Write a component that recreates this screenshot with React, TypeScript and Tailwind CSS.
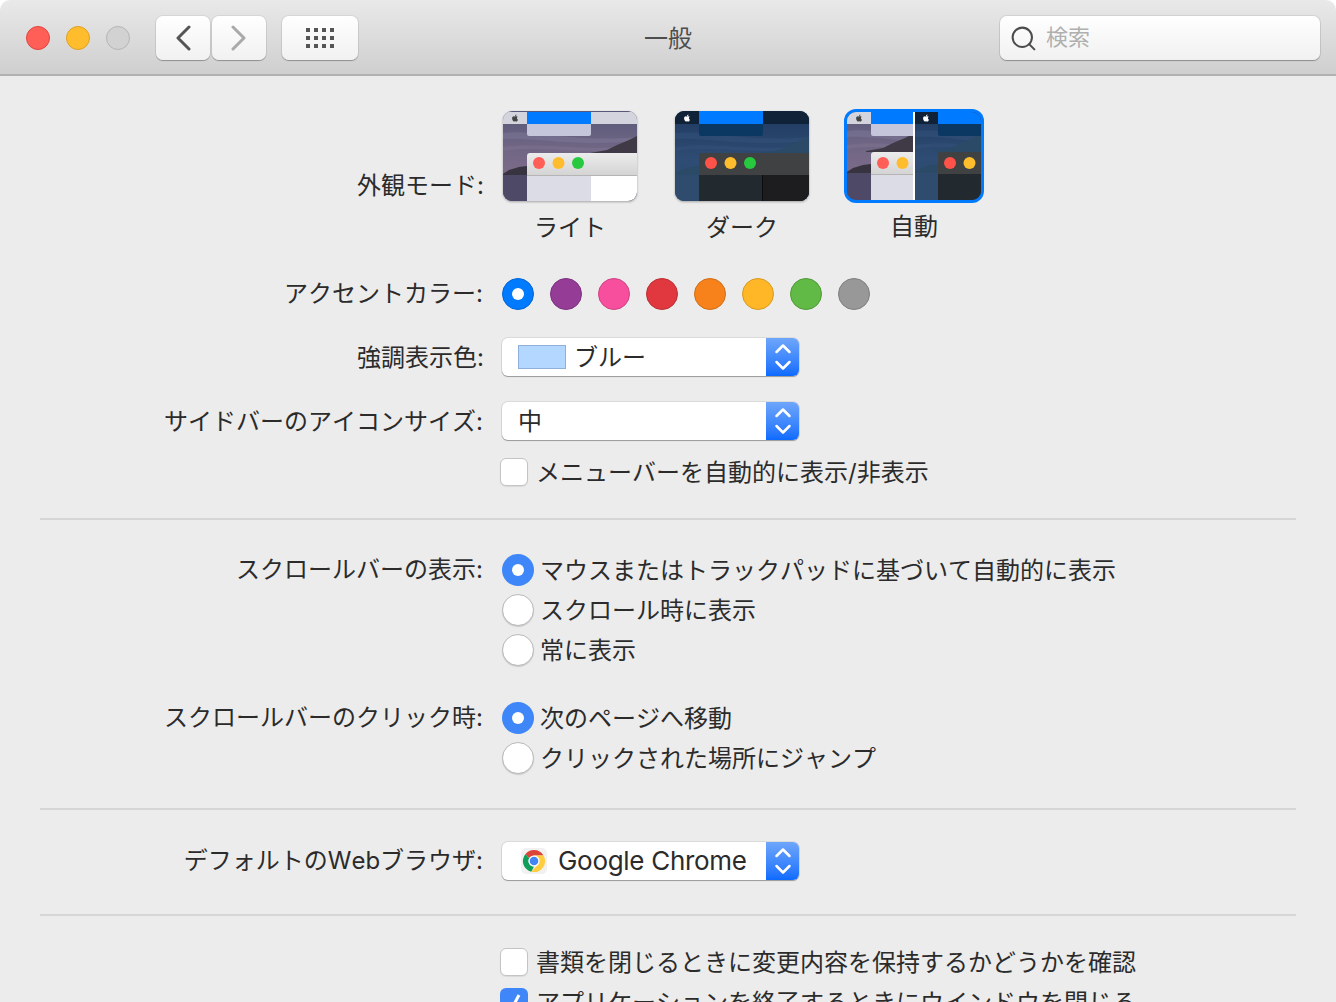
import { ReactNode } from "react";
import { Search } from "lucide-react";
import { FaApple } from "react-icons/fa";

const accents = [
  { fill: "bg-[#007aff]", ring: "border-[#0065d6]", on: true },
  { fill: "bg-[#953d96]", ring: "border-[#7c3180]", on: false },
  { fill: "bg-[#f74f9e]", ring: "border-[#cf4283]", on: false },
  { fill: "bg-[#e0383e]", ring: "border-[#bb2f34]", on: false },
  { fill: "bg-[#f7821b]", ring: "border-[#cf6d16]", on: false },
  { fill: "bg-[#ffb727]", ring: "border-[#d69a20]", on: false },
  { fill: "bg-[#62ba46]", ring: "border-[#4f9a38]", on: false },
  { fill: "bg-[#989898]", ring: "border-[#7f7f7f]", on: false },
];

function Wallpaper({ id, x, w, dark }: { id: string; x: number; w: number; dark: boolean }) {
  return (
    <g clipPath={`url(#${id})`}>
      <rect x={x} y="0" width={w} height="90" fill={`url(#${dark ? "wall-dark" : "wall-light"})`} />
      <path
        d={`M${x} 22 C ${x + 30} 18 ${x + 70} 32 ${x + w} 26 L ${x + w} 30 C ${x + 70} 36 ${x + 30} 26 ${x} 28 Z`}
        fill={dark ? "#3a5a84" : "#8a84a4"}
        opacity="0.35"
      />
      <path
        d={`M${x} 36 C ${x + 40} 30 ${x + 80} 42 ${x + w} 34 L ${x + w} 37 C ${x + 80} 45 ${x + 40} 34 ${x} 40 Z`}
        fill={dark ? "#3a5a84" : "#8a7a98"}
        opacity="0.3"
      />
      <rect x={x} y="64" width={w} height="30" fill={dark ? "#2f4c6e" : "#4f4968"} />
      <path
        d={`M${x} 63 L${x + 6} 59 L${x + 16} 56 L${x + 24} 55 L${x + 30} 58 L${x + 34} 64 L${x} 64 Z`}
        fill={dark ? "#2b4a68" : "#38343f"}
      />
      <path
        d={`M${x + w - 47} 42 L${x + w - 30} 39 L${x + w - 20} 34 L${x + w - 8} 29 L${x + w} 25 L${x + w} 43 L${x + w - 47} 43 Z`}
        fill={dark ? "#2b4a68" : "#3f3a46"}
      />
    </g>
  );
}

function LightThumb() {
  return (
    <svg width="134" height="90" viewBox="0 0 134 90" className="block drop-shadow-[0_1px_1px_rgba(0,0,0,0.3)]">
      <defs>
        <clipPath id="lt"><rect width="134" height="90" rx="9" /></clipPath>
        <linearGradient id="wall-light" x1="0" y1="0" x2="0" y2="1">
          <stop offset="0" stopColor="#585878" />
          <stop offset="0.4" stopColor="#6f6684" />
          <stop offset="0.65" stopColor="#7a6a88" />
          <stop offset="1" stopColor="#4a4565" />
        </linearGradient>
        <linearGradient id="bar-light" x1="0" y1="0" x2="0" y2="1">
          <stop offset="0" stopColor="#ececec" />
          <stop offset="1" stopColor="#d4d4d4" />
        </linearGradient>
      </defs>
      <Wallpaper id="lt" x={0} w={134} dark={false} />
      <g clipPath="url(#lt)">
        <rect y="1" width="134" height="12" fill="#d4d4de" />
        <rect x="24" y="1" width="64" height="12" fill="#007aff" />
        <path d="M24 13 H88 V23 a2 2 0 0 1 -2 2 H26 a2 2 0 0 1 -2 -2 Z" fill="#c5c5dc" />
        <path d="M24 45 a3 3 0 0 1 3 -3 H134 V64 H24 Z" fill="url(#bar-light)" />
        <rect x="24" y="64" width="110" height="1" fill="#b5b5b5" />
        <rect x="24" y="65" width="64" height="25" fill="#dcdce6" />
        <rect x="88" y="65" width="46" height="25" fill="#ffffff" />
        <circle cx="36" cy="52" r="6" fill="#ff5f57" />
        <circle cx="55.500" cy="52" r="6" fill="#ffbd2e" />
        <circle cx="75" cy="52" r="6" fill="#27c93f" />
      </g>
      <FaApple x="8" y="3" size={8} color="#444444" />
    </svg>
  );
}

function DarkThumb() {
  return (
    <svg width="134" height="90" viewBox="0 0 134 90" className="block drop-shadow-[0_1px_1px_rgba(0,0,0,0.3)]">
      <defs>
        <clipPath id="dk"><rect width="134" height="90" rx="9" /></clipPath>
        <linearGradient id="wall-dark" x1="0" y1="0" x2="0" y2="1">
          <stop offset="0" stopColor="#1f3a5f" />
          <stop offset="0.55" stopColor="#2f4c74" />
          <stop offset="1" stopColor="#2c4a6c" />
        </linearGradient>
      </defs>
      <Wallpaper id="dk" x={0} w={134} dark />
      <g clipPath="url(#dk)">
        <rect y="0" width="134" height="13" fill="#0f2238" />
        <rect x="24" y="0" width="64" height="13" fill="#007aff" />
        <path d="M24 13 H88 V23 a2 2 0 0 1 -2 2 H26 a2 2 0 0 1 -2 -2 Z" fill="#0b3862" />
        <path d="M24 45 a3 3 0 0 1 3 -3 H134 V64 H24 Z" fill="#3f4143" />
        <rect x="24" y="64" width="110" height="26" fill="#22292f" />
        <rect x="87" y="64" width="47" height="26" fill="#1d1d1f" />
        <rect x="87" y="64" width="1" height="26" fill="#0c0c0c" />
        <circle cx="36" cy="52" r="6" fill="#ff5249" />
        <circle cx="55.500" cy="52" r="6" fill="#ffbd2e" />
        <circle cx="75" cy="52" r="6" fill="#27c93f" />
      </g>
      <FaApple x="8" y="3" size={8} color="#ffffff" />
    </svg>
  );
}

function AutoThumb() {
  return (
    <svg width="140" height="94" viewBox="0 0 140 94" className="block">
      <defs>
        <clipPath id="au-a"><path d="M12 3 H69 V91 H12 a9 9 0 0 1 -9 -9 V12 a9 9 0 0 1 9 -9 Z" /></clipPath>
        <clipPath id="au-b"><path d="M71 3 H128 a9 9 0 0 1 9 9 V82 a9 9 0 0 1 -9 9 H71 Z" /></clipPath>
      </defs>
      <rect width="140" height="94" rx="12" fill="#007aff" />
      <Wallpaper id="au-a" x={3} w={66} dark={false} />
      <Wallpaper id="au-b" x={71} w={66} dark />
      <g clipPath="url(#au-a)">
        <rect x="3" y="3" width="24" height="12" fill="#d4d4de" />
        <rect x="27" y="3" width="42" height="12" fill="#007aff" />
        <path d="M27 15 H69 V27 H29 a2 2 0 0 1 -2 -2 Z" fill="#c5c5dc" />
        <path d="M27 46 a3 3 0 0 1 3 -3 H69 V65 H27 Z" fill="url(#bar-light)" />
        <rect x="27" y="65" width="42" height="1" fill="#b5b5b5" />
        <rect x="27" y="66" width="42" height="25" fill="#dcdce6" />
        <circle cx="39" cy="54" r="6" fill="#ff5f57" />
        <circle cx="58.500" cy="54" r="6" fill="#ffbd2e" />
      </g>
      <g clipPath="url(#au-b)">
        <rect x="71" y="3" width="23" height="12" fill="#0f2238" />
        <rect x="94" y="3" width="43" height="12" fill="#007aff" />
        <path d="M94 15 H137 V27 H96 a2 2 0 0 1 -2 -2 Z" fill="#0b3862" />
        <path d="M94 46 a3 3 0 0 1 3 -3 H137 V65 H94 Z" fill="#3f4143" />
        <rect x="94" y="65" width="43" height="26" fill="#22292f" />
        <circle cx="106" cy="54" r="6" fill="#ff5249" />
        <circle cx="125.500" cy="54" r="6" fill="#ffbd2e" />
      </g>
      <rect x="69" y="3" width="2" height="88" fill="#ffffff" />
      <FaApple x="11" y="5" size={8} color="#444444" />
      <FaApple x="78" y="5" size={8} color="#ffffff" />
    </svg>
  );
}

function Row({
  label,
  children,
  className,
  labelClass,
}: {
  label?: string;
  children: ReactNode;
  className?: string;
  labelClass?: string;
}) {
  return (
    <div className={`flex ${className ?? ""}`}>
      <div className={`w-[483px] shrink-0 text-right leading-[40px] ${labelClass ?? ""}`}>{label}</div>
      <div className="ml-[17px]">{children}</div>
    </div>
  );
}

function Stepper() {
  return (
    <div className="flex w-[33px] flex-col items-center justify-center rounded-r-[6px] bg-gradient-to-b from-[#6ea6fb] to-[#0a6bff]">
      <svg width="20" height="32" viewBox="0 0 20 32" fill="none" stroke="#ffffff" strokeWidth="2.500" strokeLinecap="round" strokeLinejoin="round">
        <path d="M3.500 11 L10 4.500 L16.500 11" />
        <path d="M3.500 21 L10 27.500 L16.500 21" />
      </svg>
    </div>
  );
}

function Select({ children }: { children: ReactNode }) {
  return (
    <div className="my-px ml-0.5 flex h-[38px] w-[297px] rounded-[6px] bg-white shadow-[0_0_0_1px_rgba(0,0,0,0.07),0_1px_1px_rgba(0,0,0,0.3)]">
      <div className="flex flex-1 items-center">{children}</div>
      <Stepper />
    </div>
  );
}

function Radio({ on, children }: { on?: boolean; children: ReactNode }) {
  return (
    <div className="ml-0.5 flex h-10 items-center gap-1.5">
      {on ? (
        <span className="flex size-8 items-center justify-center rounded-full bg-[#3f87f8]">
          <span className="size-3 rounded-full bg-white" />
        </span>
      ) : (
        <span className="size-8 rounded-full border border-[#b9b9b9] bg-white shadow-[0_1px_1px_rgba(0,0,0,0.15)]" />
      )}
      <span className="mt-0.5">{children}</span>
    </div>
  );
}

function Check({ on, children }: { on?: boolean; children: ReactNode }) {
  return (
    <div className="flex h-7 items-center gap-2">
      {on ? (
        <span className="flex size-7 items-center justify-center rounded-[6px] bg-[#3f87f8]">
          <svg width="20" height="20" viewBox="0 0 20 20" fill="none" stroke="#ffffff" strokeWidth="3">
            <path d="M4 11 L8 16 L15 3" />
          </svg>
        </span>
      ) : (
        <span className="size-7 rounded-[6px] border border-[#c4c4c4] bg-white shadow-[0_1px_1px_rgba(0,0,0,0.08)]" />
      )}
      <span className="mt-0.5">{children}</span>
    </div>
  );
}

function ChromeIcon() {
  return (
    <span className="ml-[19px] flex size-[26px] items-center justify-center rounded-[5px] bg-[#f1f1f1]">
      <svg width="24" height="24" viewBox="0 0 24 24">
        <path d="M12 1 A11 11 0 0 1 21.500 6.500 L12 6.500 A5.500 5.500 0 0 0 7.200 9.300 L3.500 4.900 A11 11 0 0 1 12 1 Z" fill="#db4437" />
        <path d="M3.500 4.900 L7.200 9.300 A5.500 5.500 0 0 0 12 17.500 L9.300 22.700 A11 11 0 0 1 3.500 4.900 Z" fill="#0f9d58" />
        <path d="M21.500 6.500 A11 11 0 0 1 9.300 22.700 L14.700 16.800 A5.500 5.500 0 0 0 16.800 9.300 L12 6.500 Z" fill="#ffcd40" />
        <circle cx="12" cy="12" r="5.500" fill="#ffffff" />
        <circle cx="12" cy="12" r="4.300" fill="#4285f4" />
      </svg>
    </span>
  );
}

function TitleButton({ className, children }: { className: string; children: ReactNode }) {
  return (
    <div className={`flex h-11 items-center justify-center rounded-[7px] bg-gradient-to-b from-white to-[#f1f1f1] shadow-[0_0_0_1px_rgba(0,0,0,0.06),0_1px_1px_rgba(0,0,0,0.28)] ${className}`}>
      {children}
    </div>
  );
}

const dots = Array.from({ length: 12 });

export default function App() {
  return (
    <div
      className="h-[1002px] w-[1336px] overflow-hidden bg-[#ececec] text-[24px] text-[#2b2b2b] [font-kerning:none]"
      style={{ fontFamily: '"Inter", "Noto Sans CJK JP", sans-serif' }}
    >
      <div className="bg-white">
        <div className="grid h-[76px] grid-cols-[1fr_auto_1fr] items-center rounded-t-[10px] border-b-2 border-[#b1b1b1] bg-gradient-to-b from-[#e9e9e9] to-[#cfcfcf] pt-0.5">
          <div className="flex items-center">
            <div className="ml-[26px] flex gap-4">
              <span className="size-6 rounded-full border border-[#e0443e] bg-[#ff5f57]" />
              <span className="size-6 rounded-full border border-[#dea123] bg-[#ffbd2e]" />
              <span className="size-6 rounded-full border border-[#b5b5b5] bg-[#d2d2d2]" />
            </div>
            <TitleButton className="ml-[26px] w-[54px]">
              <svg width="16" height="26" viewBox="0 0 16 26" fill="none" stroke="#555555" strokeWidth="3" strokeLinecap="round" strokeLinejoin="round">
                <path d="M14 2 L3 13 L14 24" />
              </svg>
            </TitleButton>
            <TitleButton className="ml-0.5 w-[54px]">
              <svg width="16" height="26" viewBox="0 0 16 26" fill="none" stroke="#a9a9a9" strokeWidth="3" strokeLinecap="round" strokeLinejoin="round">
                <path d="M2 2 L13 13 L2 24" />
              </svg>
            </TitleButton>
            <TitleButton className="ml-4 w-[76px]">
              <div className="grid grid-cols-4 gap-1">
                {dots.map((_, i) => (
                  <span key={i} className="size-1 bg-[#555555]" />
                ))}
              </div>
            </TitleButton>
          </div>
          <div className="mt-0.5 text-[#4d4d4d]">一般</div>
          <div className="flex justify-end pr-4">
            <div className="flex h-11 w-[320px] items-center gap-2 rounded-[7px] bg-gradient-to-b from-white to-[#f1f1f1] pl-[9px] text-[#b0b0b0] shadow-[0_0_0_1px_rgba(0,0,0,0.08),0_1px_1px_rgba(0,0,0,0.28)]">
              <Search size={29} strokeWidth={1.7} className="text-[#4c4c4c]" />
              <span className="mb-0.5 text-[22px] leading-[30px]">検索</span>
            </div>
          </div>
        </div>
      </div>

      <div className="flex pt-[33px]">
        <div className="w-[484px] shrink-0 pt-[57px] text-right leading-[40px]">外観モード:</div>
        <div className="ml-[19px] flex">
          <div className="mt-0.5 flex w-[134px] flex-col items-center">
            <LightThumb />
            <div className="mt-[13px] leading-7">ライト</div>
          </div>
          <div className="mt-0.5 ml-[38px] flex w-[134px] flex-col items-center">
            <DarkThumb />
            <div className="mt-[13px] leading-7">ダーク</div>
          </div>
          <div className="ml-[35px] flex w-[140px] flex-col items-center">
            <AutoThumb />
            <div className="mt-2.5 leading-7">自動</div>
          </div>
        </div>
      </div>

      <Row label="アクセントカラー:" className="mt-8">
        <div className="ml-0.5 flex h-10 items-center gap-4">
          {accents.map((a, i) => (
            <span key={i} className={`flex size-8 items-center justify-center rounded-full border ${a.fill} ${a.ring}`}>
              {a.on && <span className="size-3 rounded-full bg-white" />}
            </span>
          ))}
        </div>
      </Row>

      <Row label="強調表示色:" className="mt-[23px]" labelClass="h-10 pt-px pr-[-1px] translate-x-px">
        <Select>
          <span className="ml-4 h-6 w-12 border border-[#8fb0d8] bg-[#b3d7ff]" />
          <span className="mt-0.5 ml-2">ブルー</span>
        </Select>
      </Row>

      <Row label="サイドバーのアイコンサイズ:" className="mt-6" labelClass="h-10 pt-px">
        <Select>
          <span className="mt-0.5 ml-4">中</span>
        </Select>
      </Row>

      <div className="mt-[17px] pl-[500px]">
        <Check>メニューバーを自動的に表示/非表示</Check>
      </div>

      <div className="mx-10 mt-8 h-0.5 bg-[#d6d6d6]" />

      <Row label="スクロールバーの表示:" className="mt-[30px]">
        <Radio on>マウスまたはトラックパッドに基づいて自動的に表示</Radio>
        <Radio>スクロール時に表示</Radio>
        <Radio>常に表示</Radio>
      </Row>

      <Row label="スクロールバーのクリック時:" className="mt-7">
        <Radio on>次のページへ移動</Radio>
        <Radio>クリックされた場所にジャンプ</Radio>
      </Row>

      <div className="mx-10 mt-[30px] h-0.5 bg-[#d6d6d6]" />

      <Row label="デフォルトのWebブラウザ:" className="mt-[31px]">
        <Select>
          <ChromeIcon />
          <span className="mb-0.5 ml-[11px] text-[26px] tracking-[-0.3px] [font-kerning:normal]">Google Chrome</span>
        </Select>
      </Row>

      <div className="mx-10 mt-[33px] h-0.5 bg-[#d6d6d6]" />

      <div className="mt-8 flex flex-col gap-3 pl-[500px]">
        <Check>書類を閉じるときに変更内容を保持するかどうかを確認</Check>
        <Check on>アプリケーションを終了するときにウインドウを閉じる</Check>
      </div>
    </div>
  );
}
